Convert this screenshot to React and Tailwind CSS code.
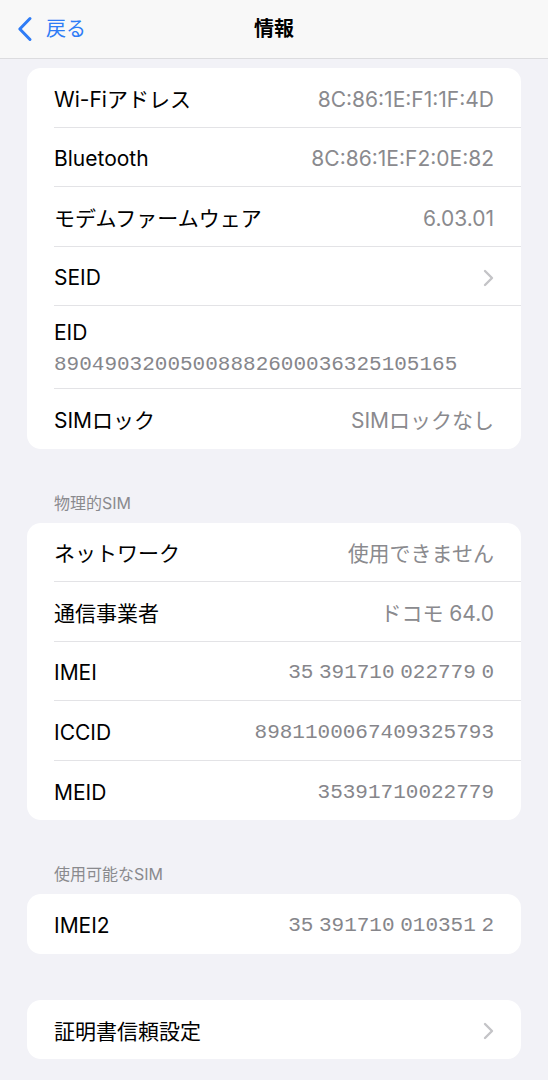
import React from 'react'

const sans = { fontFamily: '"Inter", "Noto Sans CJK JP", sans-serif' }

function Chevron() {
    return (
        <svg width="11" height="18" viewBox="0 0 11 18" fill="none" className="shrink-0">
            <path d="M2 2l7 7-7 7" stroke="#c4c4c7" strokeWidth="2.4" strokeLinecap="round" strokeLinejoin="round" />
        </svg>
    )
}

function Row({ label, value, mono, chevron, last }) {
    return (
        <div className="flex h-[59.5px] items-stretch pl-[27px]">
            <div className={`flex flex-1 items-center justify-between pt-[4px] pr-[27px] ${last ? '' : 'border-b border-[#e3e3e6]'}`}>
                <span className="text-[21px] text-black">{label}</span>
                {value && (
                    <span
                        className={
                            mono
                                ? "font-['Liberation_Mono',monospace] text-[21px] text-[#86868b] [word-spacing:-7px]"
                                : 'text-[21px] text-[#8a8a8e]'
                        }
                    >
                        {value}
                    </span>
                )}
                {chevron && <Chevron />}
            </div>
        </div>
    )
}

function Card({ children, className = '' }) {
    return <div className={`mx-[27px] overflow-hidden rounded-[14px] bg-white ${className}`}>{children}</div>
}

function Header({ children }) {
    return <div className="px-[54px] pt-[44px] pb-[10px] text-[16px] leading-[20px] text-[#8a8a8e]">{children}</div>
}

export default function App() {
    return (
        <div style={sans} className="min-h-[1080px] w-[548px] bg-[#f2f2f7]">
            {/* ナビゲーションバー */}
            <div className="relative flex h-[59px] items-center border-b border-[#dcdcdf] bg-[#f8f8f8]">
                <div className="flex items-center gap-[13px] pl-[17px] text-[#2f7cf6]">
                    <svg width="16" height="26" viewBox="0 0 16 26" fill="none">
                        <path d="M13 2.5L2.8 13 13 23.5" stroke="#2f7cf6" strokeWidth="3" strokeLinecap="round" strokeLinejoin="round" />
                    </svg>
                    <span className="text-[20px]">戻る</span>
                </div>
                <div className="absolute inset-x-0 text-center text-[20px] font-semibold text-black">情報</div>
            </div>

            <Card className="mt-[9px]">
                <Row label="Wi-Fiアドレス" value="8C:86:1E:F1:1F:4D" />
                <Row label="Bluetooth" value="8C:86:1E:F2:0E:82" />
                <Row label="モデムファームウェア" value="6.03.01" />
                <Row label="SEID" chevron />
                <div className="pl-[27px]">
                    <div className="flex h-[83px] flex-col border-b border-[#e3e3e6] pt-[13.5px] pr-[27px]">
                        <span className="text-[21px] leading-[26px] text-black">EID</span>
                        <span className="font-['Liberation_Mono',monospace] text-[21px] leading-[38px] text-[#86868b]">
                            89049032005008882600036325105165
                        </span>
                    </div>
                </div>
                <Row label="SIMロック" value="SIMロックなし" last />
            </Card>

            <Header>物理的SIM</Header>
            <Card>
                <Row label="ネットワーク" value="使用できません" />
                <Row label="通信事業者" value="ドコモ 64.0" />
                <Row label="IMEI" value="35 391710 022779 0" mono />
                <Row label="ICCID" value="8981100067409325793" mono />
                <Row label="MEID" value="35391710022779" mono last />
            </Card>

            <Header>使用可能なSIM</Header>
            <Card>
                <Row label="IMEI2" value="35 391710 010351 2" mono last />
            </Card>

            <Card className="mt-[46px]">
                <Row label="証明書信頼設定" chevron last />
            </Card>
        </div>
    )
}
